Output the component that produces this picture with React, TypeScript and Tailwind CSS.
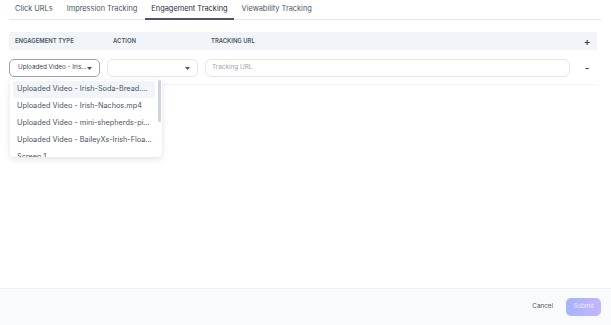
import React from "react";

const tabs = ["Click URLs", "Impression Tracking", "Engagement Tracking", "Viewability Tracking"];

const options = [
    "Uploaded Video - Irish-Soda-Bread....",
    "Uploaded Video - Irish-Nachos.mp4",
    "Uploaded Video - mini-shepherds-pi...",
    "Uploaded Video - BaileyXs-Irish-Floa...",
    "Screen 1",
];

function Caret() {
    return (
        <svg width="5" height="3" viewBox="0 0 5 3" className="shrink-0">
            <path d="M0 0h5L2.5 3z" fill="#4b5563"/>
        </svg>
    );
}

export default function App() {
    return (
        <div className="w-[611px] h-[325px] flex flex-col bg-white font-['Inter',sans-serif] overflow-hidden">
            <div className="flex-1 pl-[9px] pr-[10px] relative">
                {/* Tabs */}
                <div className="flex gap-[2px] h-[20px] border-b border-[#e5e7eb]">
                    {tabs.map((t, i) => (
                        <div
                            key={t}
                            className={
                                "px-[6px] flex items-center text-[7.4px] leading-none -mb-px " +
                                (i === 2
                                    ? "text-[#1f2937] border-b-2 border-[#4b5563]"
                                    : "text-[#4b5563] border-b-2 border-transparent")
                            }
                        >
                            {t}
                        </div>
                    ))}
                </div>

                <div className="pr-[4px]">
                    {/* Header */}
                    <div className="mt-[12px] h-[18px] bg-[#f1f5f9] grid grid-cols-[91px_91px_1fr_20px] gap-[7px] items-center">
                        <div className="pl-[6px] text-[5.9px] font-semibold text-[#4b5563] whitespace-nowrap">ENGAGEMENT TYPE</div>
                        <div className="pl-[6px] text-[5.9px] font-semibold text-[#4b5563]">ACTION</div>
                        <div className="pl-[6px] text-[5.9px] font-semibold text-[#4b5563]">TRACKING URL</div>
                        <div className="flex justify-center text-[10px] font-semibold text-[#374151] leading-none">+</div>
                    </div>

                    {/* Row */}
                    <div className="mt-[9px] pb-[7px] border-b border-[#f1f5f9] grid grid-cols-[91px_91px_1fr_20px] gap-[7px] items-center">
                        <div className="h-[18px] border border-[#9ca3af] rounded-[5px] flex items-center justify-between pl-[8px] pr-[7px]">
                            <span className="text-[6.3px] text-[#374151] whitespace-nowrap">Uploaded Video - Iris...</span>
                            <Caret/>
                        </div>
                        <div className="h-[18px] border border-[#e5e7eb] rounded-[5px] flex items-center justify-end pr-[7px]">
                            <Caret/>
                        </div>
                        <div className="h-[18px] border border-[#e5e7eb] rounded-[6px] flex items-center pl-[6px]">
                            <span className="text-[6.4px] text-[#9ca3af]">Tracking URL</span>
                        </div>
                        <div className="flex justify-center text-[10px] font-semibold text-[#374151] leading-none">-</div>
                    </div>
                </div>

                {/* Dropdown */}
                <div className="absolute left-[10px] top-[80px] w-[152px] h-[77px] bg-white rounded-b-[4px] shadow-[0_2px_6px_rgba(0,0,0,0.12)] overflow-hidden">
                    <div className="absolute right-[1px] top-0 w-[3px] h-[42px] bg-[#cbd5e1] rounded-full"/>
                    <div className="pl-[3px] pr-[7px] pt-[1px] flex flex-col">
                        {options.map((o, i) => (
                            <div
                                key={o}
                                className={
                                    "h-[17px] shrink-0 flex items-center pl-[4px] text-[7.3px] text-[#4b5563] whitespace-nowrap rounded-[2px] " +
                                    (i === 0 ? "bg-[#f1f5f9]" : "")
                                }
                            >
                                {o}
                            </div>
                        ))}
                    </div>
                </div>
            </div>

            {/* Footer */}
            <div className="h-[37px] bg-[#f8fafc] border-t border-[#eef2f6] flex items-center justify-end gap-[13px] pr-[10px]">
                <span className="text-[6.3px] text-[#4b5563]">Cancel</span>
                <button className="h-[18px] w-[35px] rounded-[5px] bg-gradient-to-r from-[#a5b4fc] to-[#c4b5fd] text-[6.3px] text-white/75">
                    Submit
                </button>
            </div>
        </div>
    );
}
